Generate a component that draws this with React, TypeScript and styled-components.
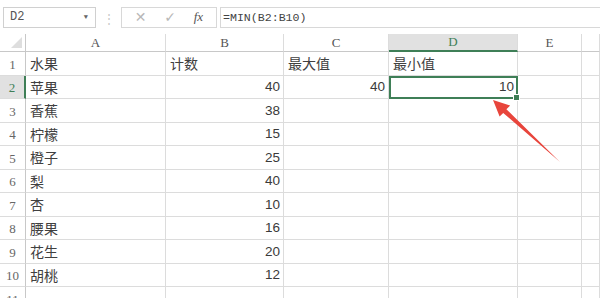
import { Fragment } from 'react';
import styled, { createGlobalStyle } from 'styled-components';

const GlobalStyle = createGlobalStyle`
  html, body {
    margin: 0;
    padding: 0;
    background: #ffffff;
  }
  body {
    width: 600px;
    height: 298px;
    overflow: hidden;
    font-family: "Noto Sans CJK SC", "Liberation Sans", sans-serif;
  }
`;

const GREEN = '#3f7f57';
const GRID = '#dcdcdc';

const Sheet = styled.div`
  position: relative;
  width: 600px;
  height: 298px;
  overflow: hidden;
  background: #fff;
`;

const Toolbar = styled.div`
  display: flex;
  align-items: center;
  height: 34px;
  padding: 0 0 0 3px;
  box-sizing: border-box;
`;

const NameBox = styled.div`
  display: flex;
  align-items: center;
  justify-content: space-between;
  width: 93px;
  height: 21px;
  box-sizing: border-box;
  border: 1px solid #d0d0d0;
  padding: 0 7px 0 6px;
  font-family: "Liberation Mono", monospace;
  font-size: 12px;
  color: #555;
`;

const Caret = styled.span`
  font-size: 7px;
  color: #666;
`;

const Dots = styled.span`
  width: 25px;
  text-align: center;
  color: #c8c8c8;
  font-size: 12px;
`;

const FxBox = styled.div`
  display: flex;
  align-items: center;
  justify-content: space-around;
  width: 96px;
  height: 21px;
  box-sizing: border-box;
  border: 1px solid #d8d8d8;
  padding: 0 4px;
`;

const FxGlyph = styled.span<{ $dark?: boolean }>`
  font-family: ${({ $dark }) => ($dark ? '"Liberation Serif", serif' : '"DejaVu Sans", sans-serif')};
  font-style: ${({ $dark }) => ($dark ? 'italic' : 'normal')};
  font-size: ${({ $dark }) => ($dark ? '13px' : '14px')};
  color: ${({ $dark }) => ($dark ? '#555' : '#b8b8b8')};
`;

const Formula = styled.div`
  flex: 1;
  display: flex;
  align-items: center;
  height: 21px;
  margin-left: 3px;
  box-sizing: border-box;
  border-top: 1px solid #d8d8d8;
  border-bottom: 1px solid #d8d8d8;
  border-left: 1px solid #d8d8d8;
  padding-left: 2px;
  font-family: "Liberation Mono", monospace;
  font-size: 11.6px;
  color: #444;
`;

const Grid = styled.div`
  display: grid;
  grid-template-columns: 26px 140px 118px 105px 129px 64px 1fr;
  grid-template-rows: 18px repeat(11, 23.5px);
`;

const Corner = styled.div`
  position: relative;
  border-right: 1px solid #c8c8c8;
  border-bottom: 1px solid #c8c8c8;
  &::after {
    content: '';
    position: absolute;
    right: 3px;
    bottom: 3px;
    width: 0;
    height: 0;
    border-left: 11px solid transparent;
    border-bottom: 11px solid #dedede;
  }
`;

const ColHead = styled.div<{ $active?: boolean }>`
  display: flex;
  align-items: center;
  justify-content: center;
  box-sizing: border-box;
  border-right: 1px solid ${GRID};
  border-bottom: ${({ $active }) => ($active ? `2px solid ${GREEN}` : '1px solid #c8c8c8')};
  background: ${({ $active }) => ($active ? '#e1e1e1' : '#fff')};
  color: ${({ $active }) => ($active ? GREEN : '#555')};
  font-family: "Liberation Serif", serif;
  font-size: 13px;
`;

const RowHead = styled.div<{ $active?: boolean }>`
  display: flex;
  align-items: center;
  justify-content: center;
  box-sizing: border-box;
  border-right: ${({ $active }) => ($active ? `2px solid ${GREEN}` : '1px solid #c8c8c8')};
  border-bottom: 1px solid ${GRID};
  background: ${({ $active }) => ($active ? '#e1e1e1' : '#fff')};
  color: ${({ $active }) => ($active ? GREEN : '#666')};
  font-family: "Liberation Serif", serif;
  font-size: 13px;
  padding-top: 3px;
`;

const Cell = styled.div<{ $num?: boolean; $selected?: boolean }>`
  position: relative;
  display: flex;
  align-items: center;
  justify-content: ${({ $num }) => ($num ? 'flex-end' : 'flex-start')};
  box-sizing: border-box;
  padding: 0 3px 0 4px;
  border-right: 1px solid ${GRID};
  border-bottom: 1px solid ${GRID};
  font-family: ${({ $num }) =>
    $num ? '"Liberation Sans", sans-serif' : '"Noto Sans CJK SC", sans-serif'};
  font-size: ${({ $num }) => ($num ? '13.5px' : '14px')};
  color: ${({ $num }) => ($num ? '#3a3a3a' : '#404040')};
  white-space: nowrap;
  ${({ $selected }) =>
    $selected &&
    `
    outline: 2px solid ${GREEN};
    outline-offset: -2px;
    z-index: 1;
    &::after {
      content: '';
      position: absolute;
      right: -3px;
      bottom: -3px;
      width: 5px;
      height: 5px;
      background: ${GREEN};
      border: 1px solid #fff;
    }
  `}
`;

const Arrow = styled.svg`
  position: absolute;
  left: 0;
  top: 0;
  pointer-events: none;
  z-index: 2;
`;

const cols = ['A', 'B', 'C', 'D', 'E', ''];

type Row = [string, string, string, string];

const rows: Row[] = [
  ['水果', '计数', '最大值', '最小值'],
  ['苹果', '40', '40', '10'],
  ['香蕉', '38', '', ''],
  ['柠檬', '15', '', ''],
  ['橙子', '25', '', ''],
  ['梨', '40', '', ''],
  ['杏', '10', '', ''],
  ['腰果', '16', '', ''],
  ['花生', '20', '', ''],
  ['胡桃', '12', '', ''],
  ['', '', '', ''],
];

const isNum = (v: string) => /^\d+$/.test(v);

export default function App() {
  return (
    <Sheet>
      <GlobalStyle />
      <Toolbar>
        <NameBox>
          <span>D2</span>
          <Caret>▼</Caret>
        </NameBox>
        <Dots>⋮</Dots>
        <FxBox>
          <FxGlyph>✕</FxGlyph>
          <FxGlyph>✓</FxGlyph>
          <FxGlyph $dark>fx</FxGlyph>
        </FxBox>
        <Formula>=MIN(B2:B10)</Formula>
      </Toolbar>
      <Grid>
        <Corner />
        {cols.map((c, i) => (
          <ColHead key={`h${i}`} $active={c === 'D'}>
            {c}
          </ColHead>
        ))}
        {rows.map((r, ri) => (
          <Fragment key={`row${ri}`}>
            <RowHead $active={ri === 1}>{ri + 1}</RowHead>
            {r.map((v, ci) => (
              <Cell
                key={`c${ri}-${ci}`}
                $num={isNum(v) && ri > 0}
                $selected={ri === 1 && ci === 3}
              >
                {v}
              </Cell>
            ))}
            <Cell />
            <Cell />
          </Fragment>
        ))}
      </Grid>
      <Arrow width="600" height="298" viewBox="0 0 600 298">
        <polygon
          points="493,100 499.6,116.6 503.2,112.9 560,162 506.4,109.2 510.2,105.6"
          fill="#e8453c"
        />
      </Arrow>
    </Sheet>
  );
}
